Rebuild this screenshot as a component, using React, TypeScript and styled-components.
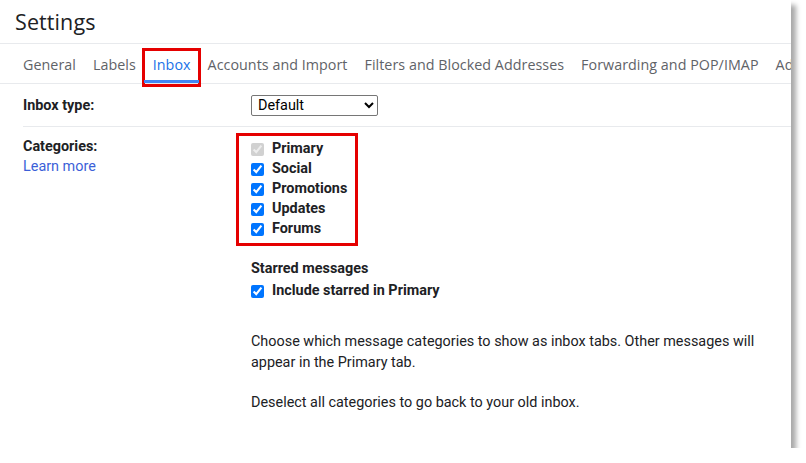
import React from "react";
import styled, { createGlobalStyle } from "styled-components";

const Global = createGlobalStyle`
  html, body { margin: 0; padding: 0; background: #ffffff; }
  body { font-family: Roboto, "Liberation Sans", Arial, sans-serif; color: #202124; }
  * { box-sizing: border-box; }
`;

const Panel = styled.div`
  width: 791px;
  height: 448px;
  background: #ffffff;
  box-shadow: 5px 5px 5px rgba(0, 0, 0, 0.34);
  overflow: hidden;
  display: flex;
  flex-direction: column;
`;

const Header = styled.div`
  height: 44px;
  padding: 9px 0 0 15px;
  font-family: "Open Sans", Roboto, sans-serif;
  font-size: 21.5px;
  line-height: 26px;
  color: #202124;
  border-bottom: 1px solid #e8eaed;
  letter-spacing: 0.1px;
`;

const Tabs = styled.div`
  display: flex;
  height: 40px;
  padding-left: 14.5px;
  border-bottom: 1px solid #e8eaed;
  white-space: nowrap;
`;

const Tab = styled.div<{ $active?: boolean }>`
  position: relative;
  flex: none;
  padding: 0 8.5px;
  display: flex;
  align-items: center;
  padding-top: 1px;
  font-family: "Open Sans", Roboto, sans-serif;
  font-size: 14.3px;
  letter-spacing: 0.04px;
  color: ${(p) => (p.$active ? "#1a73e8" : "#5f6368")};
  &::after {
    content: "";
    display: ${(p) => (p.$active ? "block" : "none")};
    position: absolute;
    left: 0;
    right: 0;
    bottom: 0;
    height: 3px;
    background: #4285f4;
  }
`;

const TabHighlight = styled.div`
  position: absolute;
  left: -2px;
  right: -2px;
  top: 4px;
  bottom: -4px;
  border: 3px solid #e50000;
  pointer-events: none;
`;

const Body = styled.div`
  padding-left: 23px;
`;

const Row = styled.div<{ $divider?: boolean }>`
  display: grid;
  grid-template-columns: 228px 1fr;
  border-bottom: ${(p) => (p.$divider ? "1px solid #e8eaed" : "none")};
`;

const LabelCol = styled.div<{ $top: number }>`
  padding-top: ${(p) => p.$top}px;
  font-size: 14.4px;
  line-height: 20px;
`;

const FieldLabel = styled.div`
  font-weight: 700;
  color: #202124;
`;

const LearnMore = styled.a`
  color: #3c5fd8;
  text-decoration: none;
`;

const ValueCol = styled.div<{ $top: number; $bottom?: number }>`
  padding-top: ${(p) => p.$top}px;
  padding-bottom: ${(p) => p.$bottom ?? 0}px;
  font-size: 14.4px;
  line-height: 20px;
`;

const Select = styled.select`
  width: 127px;
  height: 21px;
  font-family: Roboto, "Liberation Sans", sans-serif;
  font-size: 14.4px;
  color: #000;
  border: 1px solid #767676;
  border-radius: 2px;
  padding: 0 2px;
  background: #fff;
  margin: 0;
  display: block;
`;

const CheckList = styled.div`
  position: relative;
  width: max-content;
`;

const ListHighlight = styled.div`
  position: absolute;
  left: -15px;
  top: -6px;
  width: 122px;
  height: 113px;
  border: 3px solid #e50000;
  pointer-events: none;
`;

const CheckRow = styled.label`
  display: flex;
  align-items: center;
  height: 20px;
  font-weight: 700;
  color: #202124;
  gap: 8px;
`;

const Box = styled.input`
  width: 13px;
  height: 13px;
  margin: 0;
  accent-color: #0075ff;
`;

const SubHead = styled.div`
  margin-top: 20px;
  font-weight: 700;
  color: #202124;
`;

const Gap = styled.div<{ $h: number }>`
  height: ${(p) => p.$h}px;
`;

const Para = styled.p`
  margin: 0;
  width: 530px;
  line-height: 21px;
  color: #202124;
`;

const tabs = [
  "General",
  "Labels",
  "Inbox",
  "Accounts and Import",
  "Filters and Blocked Addresses",
  "Forwarding and POP/IMAP",
  "Add-ons",
];

const categories = ["Primary", "Social", "Promotions", "Updates", "Forums"];

export default function App() {
  return (
    <>
      <Global />
      <Panel>
        <Header>Settings</Header>
        <Tabs>
          {tabs.map((t) => (
            <Tab key={t} $active={t === "Inbox"}>
              {t}
              {t === "Inbox" && <TabHighlight />}
            </Tab>
          ))}
        </Tabs>
        <Body>
          <Row $divider>
            <LabelCol $top={12}>
              <FieldLabel>Inbox type:</FieldLabel>
            </LabelCol>
            <ValueCol $top={11} $bottom={10}>
              <Select defaultValue="Default">
                <option>Default</option>
              </Select>
            </ValueCol>
          </Row>
          <Row>
            <LabelCol $top={10}>
              <FieldLabel>Categories:</FieldLabel>
              <LearnMore href="#">Learn more</LearnMore>
            </LabelCol>
            <ValueCol $top={12}>
              <CheckList>
                {categories.map((c) => (
                  <CheckRow key={c}>
                    <Box
                      type="checkbox"
                      defaultChecked
                      disabled={c === "Primary"}
                    />
                    {c}
                  </CheckRow>
                ))}
                <ListHighlight />
              </CheckList>
              <SubHead>Starred messages</SubHead>
              <Gap $h={2} />
              <CheckRow>
                <Box type="checkbox" defaultChecked />
                Include starred in Primary
              </CheckRow>
              <Gap $h={30} />
              <Para>
                Choose which message categories to show as inbox tabs. Other
                messages will appear in the Primary tab.
              </Para>
              <Gap $h={19} />
              <Para>Deselect all categories to go back to your old inbox.</Para>
            </ValueCol>
          </Row>
        </Body>
      </Panel>
    </>
  );
}
